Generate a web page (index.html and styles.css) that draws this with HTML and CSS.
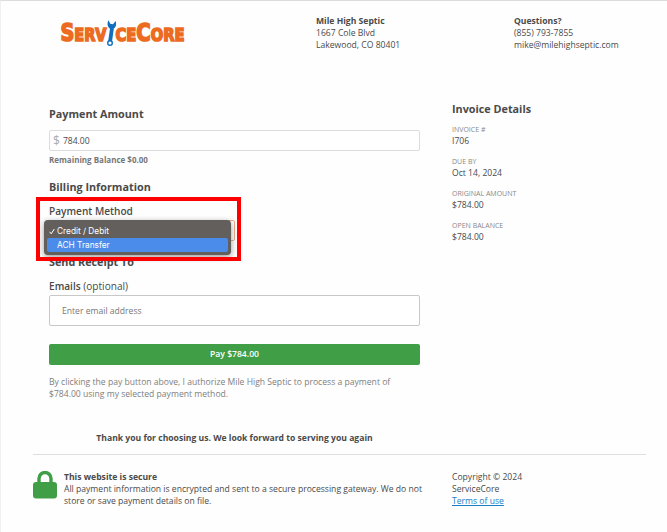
FILE: index.html
```html
<!DOCTYPE html>
<html lang="en">
<head>
    <meta charset="UTF-8" />
    <title>Pay Invoice</title>
    <link rel="stylesheet" href="styles.css">
</head>
<body>

<div class="page">
    <!-- Header -->
    <header class="header">
        <svg class="logo" width="130" height="32" viewBox="0 -4 130 32">
            <g class="logo-text">
                <text x="1.5" y="21.5" textLength="46" lengthAdjust="spacingAndGlyphs"><tspan font-size="24">S</tspan><tspan font-size="18">ERV</tspan></text>
                <text x="56.5" y="21.5" textLength="69" lengthAdjust="spacingAndGlyphs"><tspan font-size="18">CE</tspan><tspan font-size="24">C</tspan><tspan font-size="18">ORE</tspan></text>
            </g>
            <path d="M53 9 L51 23" stroke="#0f6fbc" stroke-width="3.8" fill="none"/>
            <path d="M49.6 1.2 L51.2 4.8 L54 5.2 L56.6 2 C58 6 56.4 10 53 10 C48.8 10 47.4 4.5 49.6 1.2 Z" fill="#0f6fbc"/>
            <circle cx="51" cy="24" r="2.3" stroke="#0f6fbc" stroke-width="1.4" fill="#fff"/>
        </svg>
        <div class="company">
            <strong>Mile High Septic</strong><br>
            1667 Cole Blvd<br>
            Lakewood, CO 80401
        </div>
        <div class="contact">
            <strong>Questions?</strong><br>
            (855) 793-7855<br>
            mike@milehighseptic.com
        </div>
    </header>

    <!-- Payment form -->
    <div class="content">
        <div class="form">
            <h2 class="amount-title">Payment Amount</h2>
            <div class="amount"><span class="dollar">$</span>784.00</div>
            <div class="remaining">Remaining Balance $0.00</div>

            <h2 class="billing-title">Billing Information</h2>
            <div class="method">
                <div class="label">Payment Method</div>
                <div class="select"></div>
                <div class="highlight"></div>
                <div class="menu">
                    <div class="option">
                        <svg class="check" width="6" height="7" viewBox="0 0 6 7"><path d="M.6 3.8 L2.2 5.8 L5.3 1"/></svg>
                        Credit / Debit
                    </div>
                    <div class="option selected">ACH Transfer</div>
                </div>
            </div>

            <h2 class="receipt-title">Send Receipt To</h2>
            <div class="label emails">Emails <span>(optional)</span></div>
            <div class="email-input">Enter email address</div>
            <div class="pay">Pay $784.00</div>
            <p class="terms">By clicking the pay button above, I authorize Mile High Septic to process a payment of<br>$784.00 using my selected payment method.</p>
            <p class="thanks">Thank you for choosing us. We look forward to serving you again</p>
        </div>

        <div class="invoice">
            <h2>Invoice Details</h2>
            <dl>
                <dt>INVOICE #</dt>
                <dd>I706</dd>
                <dt>DUE BY</dt>
                <dd>Oct 14, 2024</dd>
                <dt>ORIGINAL AMOUNT</dt>
                <dd>$784.00</dd>
                <dt>OPEN BALANCE</dt>
                <dd>$784.00</dd>
            </dl>
        </div>
    </div>

    <!-- Footer -->
    <footer class="footer">
        <svg class="lock" width="24" height="28" viewBox="0 0 24 28">
            <path d="M6 12 V7.5 a6 6 0 0 1 12 0 V12" fill="none" stroke="#3f9e46" stroke-width="3.4"/>
            <rect x="0" y="11" width="24" height="16.5" rx="3" fill="#3f9e46"/>
        </svg>
        <div class="secure">
            <strong>This website is secure</strong><br>
            All payment information is encrypted and sent to a secure processing gateway. We do not<br>
            store or save payment details on file.
        </div>
        <div class="copyright">
            Copyright © 2024<br>
            ServiceCore<br>
            <a href="#">Terms of use</a>
        </div>
    </footer>
</div>

</body>
</html>
```
FILE: styles.css
```css
* {
    box-sizing: border-box;
}

body {
    margin: 0;
    background-color: #fefefe;
    color: #4a4a4a;
    font-family: "Open Sans", sans-serif;
    font-size: 8.6px;
    line-height: 12px;
    white-space: nowrap;
}

.page {
    height: 532px;
    overflow: hidden;
    border-top: 1px solid #dcdcdc;
    border-left: 1px solid #f0f0f0;
}

h2 {
    margin: 0;
    font-size: 10.8px;
    line-height: 14px;
    font-weight: 700;
}

p {
    margin: 0;
}

.header {
    display: grid;
    grid-template-columns: 257px 198px 1fr;
    padding: 14px 0 0 58px;
    height: 99px;
    align-items: start;
}

.logo {
    overflow: visible;
}

.logo-text {
    font-family: "DejaVu Sans", sans-serif;
    font-weight: 700;
    fill: #ec6b1f;
    stroke: #ec6b1f;
    stroke-width: 1.7px;
}

.content {
    display: grid;
    grid-template-columns: 371px 1fr;
    column-gap: 32px;
    padding-left: 48px;
    height: 354px;
}

.amount-title {
    margin-top: 7px;
}

.amount {
    display: flex;
    align-items: center;
    gap: 3px;
    height: 21px;
    margin-top: 9px;
    padding-left: 3px;
    border: 1px solid #dcdcdc;
    border-radius: 2px;
    background-color: #fff;
}

.dollar {
    color: #aaa;
    font-size: 12px;
}

.remaining {
    margin-top: 3px;
    color: #777;
    font-size: 8px;
    font-weight: 700;
}

.billing-title {
    margin-top: 14px;
}

.method {
    position: relative;
    height: 61px;
    padding-top: 10px;
}

.label {
    font-size: 10.1px;
    line-height: 14px;
    font-weight: 600;
}

.label span {
    font-weight: 400;
}

.select {
    width: 186px;
    height: 21px;
    margin-top: 2px;
    border: 1px solid #f0a988;
    border-radius: 2px;
}

/* red frame around the open dropdown */
.highlight {
    position: absolute;
    z-index: 2;
    left: -13px;
    top: 3px;
    width: 205px;
    height: 64px;
    border: 4px solid #fe0000;
}

.menu {
    position: absolute;
    z-index: 1;
    left: -5px;
    top: 26px;
    width: 187px;
    height: 35px;
    padding: 4px 3px 3px;
    border-radius: 4px;
    background-color: #625f5d;
    box-shadow: 0 2px 6px rgba(0, 0, 0, 0.4);
    color: #fff;
    font-family: Inter, sans-serif;
    font-size: 8.3px;
}

.option {
    position: relative;
    height: 14px;
    padding-left: 10px;
    line-height: 14px;
    border-radius: 2px;
}

.option.selected {
    background-color: #4b8cea;
}

.check {
    position: absolute;
    left: 2px;
    top: 4px;
    fill: none;
    stroke: #fff;
    stroke-width: 1;
}

.receipt-title {
    margin-top: 0;
}

.emails {
    margin-top: 10px;
}

.email-input {
    height: 31px;
    margin-top: 2px;
    padding-left: 12px;
    border: 1px solid #c8c8c8;
    border-radius: 2px;
    background-color: #fff;
    color: #777;
    line-height: 30px;
}

.pay {
    height: 21px;
    margin-top: 18px;
    border-radius: 2px;
    background-color: #3f9e46;
    color: #fff;
    font-weight: 600;
    line-height: 21px;
    text-align: center;
}

.terms {
    margin-top: 11px;
    color: #808080;
}

.thanks {
    margin-top: 32px;
    font-weight: 700;
    text-align: center;
}

.invoice h2 {
    margin-top: 2px;
}

dl {
    margin: 8px 0 0;
}

dt {
    color: #888;
    font-size: 7px;
    line-height: 11px;
}

dd {
    margin: 0 0 9px;
}

.footer {
    display: grid;
    grid-template-columns: 31px 388px 1fr;
    width: 613px;
    margin-left: 32px;
    padding-top: 16px;
    border-top: 1px solid #dedede;
}

.copyright a {
    color: #1b7fc4;
}
```
